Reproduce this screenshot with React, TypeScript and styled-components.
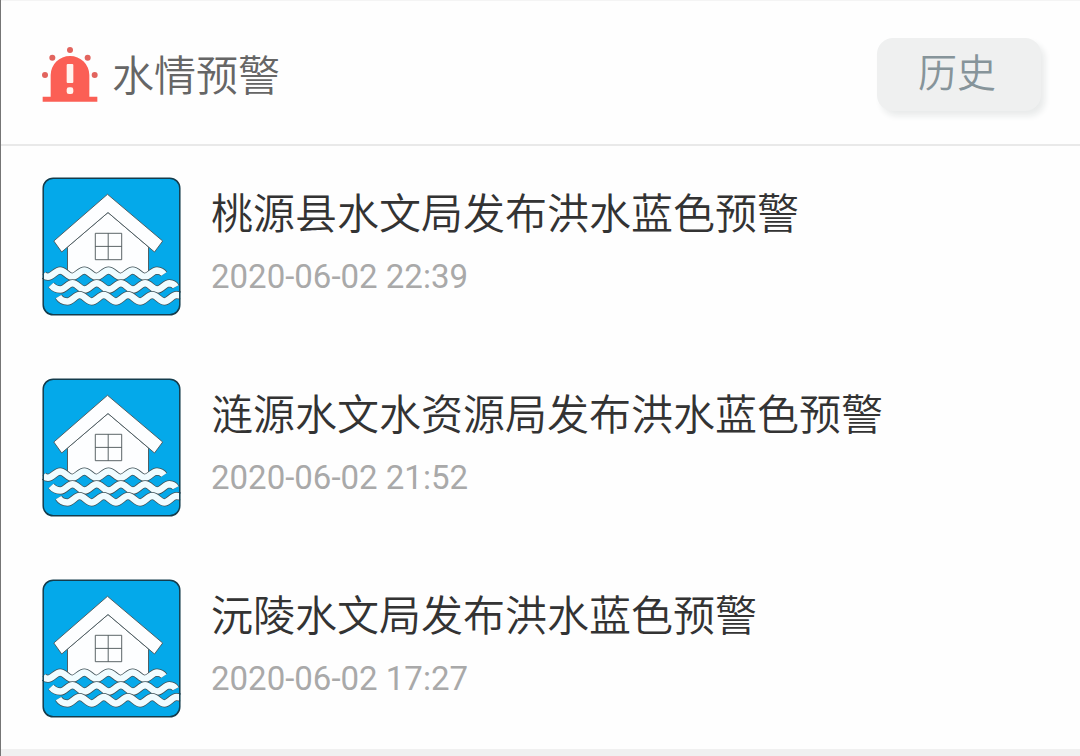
import React from "react";
import styled, { createGlobalStyle } from "styled-components";

const GlobalStyle = createGlobalStyle`
  * { box-sizing: border-box; }
  body {
    margin: 0;
    background: #f0f0f0;
    font-family: Roboto, "Noto Sans CJK SC", sans-serif;
  }
`;

const Page = styled.div`
  min-height: 100vh;
  border-left: 1px solid #757575;
`;

const Panel = styled.main`
  background: #fefefe;
`;

const Header = styled.header`
  display: flex;
  align-items: center;
  justify-content: space-between;
  height: 146px;
  padding: 4px 39px 0 41px;
  border-top: 1px solid #f4f4f4;
  border-bottom: 2px solid #e9e9e9;
`;

const Heading = styled.h1`
  display: flex;
  align-items: center;
  gap: 14px;
  margin: 0;
  color: #666;
  font-size: 42px;
  font-weight: 350;
  line-height: 60px;
`;

const HeadingText = styled.span`
  padding-top: 4px;
`;

const HistoryButton = styled.button`
  width: 164px;
  height: 73px;
  padding: 0 4px 2px 0;
  border: 0;
  border-radius: 16px;
  background: #eff0f0;
  box-shadow: 4px 5px 6px #e9ebeb;
  color: #86949a;
  font-family: inherit;
  font-size: 39px;
  font-weight: 350;
  line-height: 56px;
`;

const List = styled.ul`
  margin: 0;
  padding: 0;
  list-style: none;
`;

const Row = styled.li`
  display: flex;
  gap: 30px;
  padding: 31px 40px 31px 41px;
`;

const Title = styled.h2`
  margin: 8px 0 0;
  color: #333;
  font-size: 42px;
  font-weight: 350;
  line-height: 60px;
`;

const Time = styled.time`
  display: block;
  margin-top: 12px;
  color: #a9a9a9;
  font-size: 33px;
  line-height: 40px;
`;

const Icon = styled.svg`
  display: block;
  flex: none;
`;

const SirenIcon = () => (
  <Icon width="56" height="56" viewBox="0 0 168 168" fill="#fb5f55" aria-hidden="true">
    <path d="M26 149V84a58 57 0 0 1 116 0v65h24v15H2v-15z" />
    <g fill="#e2645e">
      <circle cx="84" cy="9" r="9" />
      <circle cx="31" cy="32" r="9" />
      <circle cx="137" cy="32" r="9" />
      <circle cx="9" cy="84" r="9" />
      <circle cx="158" cy="84" r="9" />
    </g>
    <rect x="74" y="51" width="20" height="57" rx="3" fill="#fff3ee" />
    <rect x="74" y="121" width="20" height="20" rx="7" fill="#fff3ee" />
  </Icon>
);

// Starts in a trough and swings between crest and trough every 12 units.
const wave = (lead: string, swings: number, tail: string) => {
  let d = lead;
  for (let i = 0; i < swings; i++) {
    const rise = i % 2 ? 6.4 : -6.4;
    d += `c4.6 0 7.6 ${rise} 12.1 ${rise}`;
  }
  return d + tail;
};

const waves = [
  wave("M7 103.2q2 2.6 5 2.6", 9, "q4.6 .2 7 3.6"),
  wave("M15 114q4 4.6 9.4 4.6", 9, "q4.6 .2 6.4 3.6"),
  wave("M22.5 125.6q3 4.8 9 4.8", 9, "q4 0 6 1.8"),
];

const FloodIcon = () => (
  <Icon width="139" height="139" viewBox="6 6 139 139" fill="none" aria-hidden="true">
    <rect x="7.2" y="7.2" width="136.6" height="136.6" rx="10" fill="#04a9ea" />
    <g fill="#fdfeff" stroke="#4a5457" strokeWidth=".9" strokeLinejoin="round">
      <path d="M31.5 103V76L72 41.5L112.5 76V103" />
      <path d="M71.5 23.3L126.7 70L118.5 81L72 41.5L25.7 81L17.8 70z" />
      <path d="M59.3 62.3h26.4v26.4H59.3zM72.2 62.3v26.4M59.3 75.4h26.4" />
    </g>
    {waves.map((d) => (
      <g key={d}>
        <path d={d} stroke="#405258" strokeWidth="8" />
        <path d={d} stroke="#f0fcff" strokeWidth="6.5" />
      </g>
    ))}
    <rect x="7.2" y="7.2" width="136.6" height="136.6" rx="10" stroke="#143c4c" strokeWidth="1.5" />
  </Icon>
);

const alerts = [
  { title: "桃源县水文局发布洪水蓝色预警", time: "2020-06-02 22:39" },
  { title: "涟源水文水资源局发布洪水蓝色预警", time: "2020-06-02 21:52" },
  { title: "沅陵水文局发布洪水蓝色预警", time: "2020-06-02 17:27" },
];

export default function App() {
  return (
    <Page lang="zh-CN">
      <GlobalStyle />
      <Panel>
        <Header>
          <Heading>
            <SirenIcon />
            <HeadingText>水情预警</HeadingText>
          </Heading>
          <HistoryButton type="button">历史</HistoryButton>
        </Header>
        <List>
          {alerts.map((alert) => (
            <Row key={alert.time}>
              <FloodIcon />
              <div>
                <Title>{alert.title}</Title>
                <Time dateTime={alert.time}>{alert.time}</Time>
              </div>
            </Row>
          ))}
        </List>
      </Panel>
    </Page>
  );
}
